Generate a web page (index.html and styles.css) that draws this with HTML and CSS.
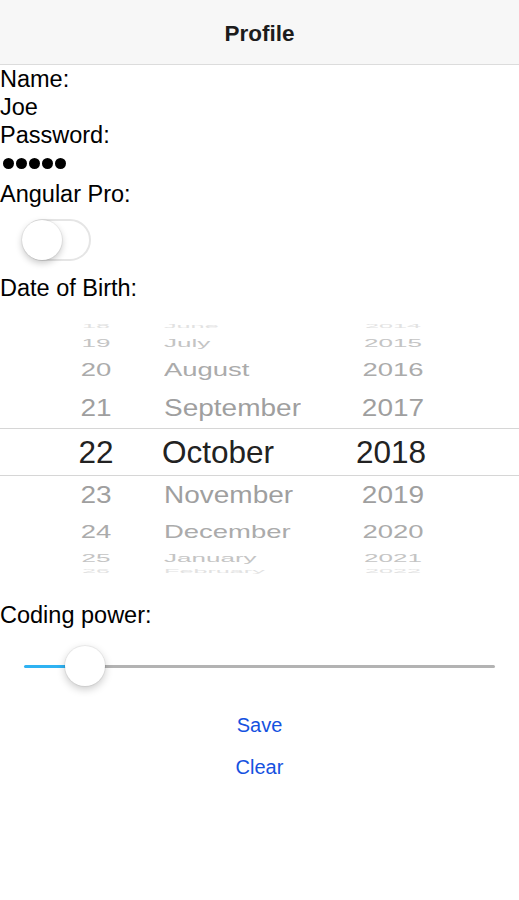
FILE: index.html
```html
<!DOCTYPE html>
<html lang="en">
<head>
<meta charset="utf-8">
<title>Profile</title>
<link rel="stylesheet" href="styles.css">
</head>
<body>
<header class="toolbar"><h1 class="title">Profile</h1></header>
<main class="form">
  <div class="line">Name:</div>
  <div class="line">Joe</div>
  <div class="line">Password:</div>
  <div class="line dots"><span class="dot"></span><span class="dot"></span><span class="dot"></span><span class="dot"></span><span class="dot"></span></div>
  <div class="line gap">Angular Pro:</div>
  <div class="switch-wrap"><div class="switch"><span class="knob"></span></div></div>
  <div class="line">Date of Birth:</div>

  <div class="picker">
    <div class="rows">
      <div class="row k4"><span class="day">18</span><span class="month">June</span><span class="year">2014</span></div>
      <div class="row k3"><span class="day">19</span><span class="month">July</span><span class="year">2015</span></div>
      <div class="row k2"><span class="day">20</span><span class="month">August</span><span class="year">2016</span></div>
      <div class="row k1 up"><span class="day">21</span><span class="month">September</span><span class="year">2017</span></div>
      <div class="row k0"><span class="day">22</span><span class="month">October</span><span class="year">2018</span></div>
      <div class="row k1 down"><span class="day">23</span><span class="month">November</span><span class="year">2019</span></div>
      <div class="row k2 down"><span class="day">24</span><span class="month">December</span><span class="year">2020</span></div>
      <div class="row k3 down"><span class="day">25</span><span class="month">January</span><span class="year">2021</span></div>
      <div class="row k4 down"><span class="day">26</span><span class="month">February</span><span class="year">2022</span></div>
    </div>
  </div>

  <div class="line power">Coding power:</div>
  <div class="slider">
    <span class="fill"></span>
    <span class="thumb"></span>
    <span class="rest"></span>
  </div>

  <div class="actions">
    <button class="btn">Save</button>
    <button class="btn">Clear</button>
  </div>
</main>
</body>
</html>
```
FILE: styles.css
```css
html, body {
  margin: 0;
  padding: 0;
  background: #ffffff;
}
body {
  font-family: "Liberation Sans", Arial, sans-serif;
  font-size: 23.5px;
  line-height: 28px;
  color: #000;
}
.toolbar {
  height: 60px;
  padding-top: 4px;
  background: #f7f7f7;
  border-bottom: 1px solid #dcdcdc;
  display: flex;
  align-items: center;
  justify-content: center;
}
.title {
  margin: 0;
  font-size: 22.5px;
  font-weight: bold;
  color: #1c1c1c;
  line-height: 28px;
}
.line {
  height: 28px;
  white-space: nowrap;
}
.dots {
  display: flex;
  align-items: center;
  gap: 2px;
  padding-left: 3px;
}
.dot {
  width: 11px;
  height: 11px;
  border-radius: 50%;
  background: #000;
}
.gap { margin-top: 3px; }
.switch-wrap {
  padding: 11px 0 13px 22px;
}
.switch {
  box-sizing: border-box;
  width: 69px;
  height: 42px;
  border: 2px solid #e5e5e5;
  border-radius: 21px;
  background: #fff;
  display: flex;
  align-items: center;
}
.knob {
  width: 40px;
  height: 40px;
  margin-left: -2px;
  border-radius: 50%;
  background: #fff;
  box-shadow: 0 3px 7px rgba(0,0,0,0.22), 0 0 0 1px rgba(0,0,0,0.05);
}

/* picker */
.picker {
  margin-top: 22px;
  height: 250px;
  overflow: hidden;
}
.rows {
  margin-top: -4px;
}
.row {
  display: flex;
  align-items: center;
  font-size: 28px;
  white-space: nowrap;
  color: #9e9e9e;
}
.row span {
  display: inline-block;
  line-height: 32px;
}
.day {
  width: 80px;
  margin-left: 56px;
  text-align: center;
}
.month {
  width: 166px;
  margin-left: 28px;
  transform-origin: 0 50%;
}
.year {
  width: 120px;
  margin-left: 3px;
  text-align: center;
}
.k4 { height: 14px; color: #e2e2e2; }
.k4 span { transform: scale(0.9, 0.16); }
.k3 { height: 18px; color: #c4c4c4; }
.k3 span { transform: scale(0.93, 0.42); }
.k3.down { height: 16px; }
.k4.down { height: 12px; }
.k2 { height: 36px; color: #ababab; }
.k2 span { transform: scale(0.98, 0.68); }
.k1 { color: #9f9f9f; }
.k1.up { height: 40px; }
.k1.down { height: 38px; }
.k1 span { transform: scaleY(0.86); }
.k0 {
  box-sizing: border-box;
  height: 48px;
  border-top: 1px solid #d6d6d6;
  border-bottom: 1px solid #d6d6d6;
  font-size: 31.5px;
  color: #222;
}
.k0 .month { margin-left: 26px; }

.power { margin-top: 27px; }
.slider {
  margin: 17px 24px 0 24px;
  height: 40px;
  display: flex;
  align-items: center;
}
.fill {
  flex: 0 0 44px;
  height: 3px;
  background: #2fb2f2;
  border-radius: 2px 0 0 2px;
}
.thumb {
  position: relative;
  z-index: 1;
  flex: 0 0 40px;
  height: 40px;
  margin-left: -3px;
  border-radius: 50%;
  background: #fff;
  box-shadow: 0 3px 8px rgba(0,0,0,0.22), 0 0 0 1px rgba(0,0,0,0.05);
}
.rest {
  flex: 1;
  height: 3px;
  margin-left: -2px;
  background: #b3b3b3;
  border-radius: 0 2px 2px 0;
}
.actions {
  margin-top: 18px;
  display: flex;
  flex-direction: column;
  align-items: center;
}
.btn {
  height: 42px;
  padding: 0 10px;
  border: 0;
  background: transparent;
  font-family: "Liberation Sans", Arial, sans-serif;
  font-size: 20px;
  color: #1551e0;
  cursor: pointer;
}
```
